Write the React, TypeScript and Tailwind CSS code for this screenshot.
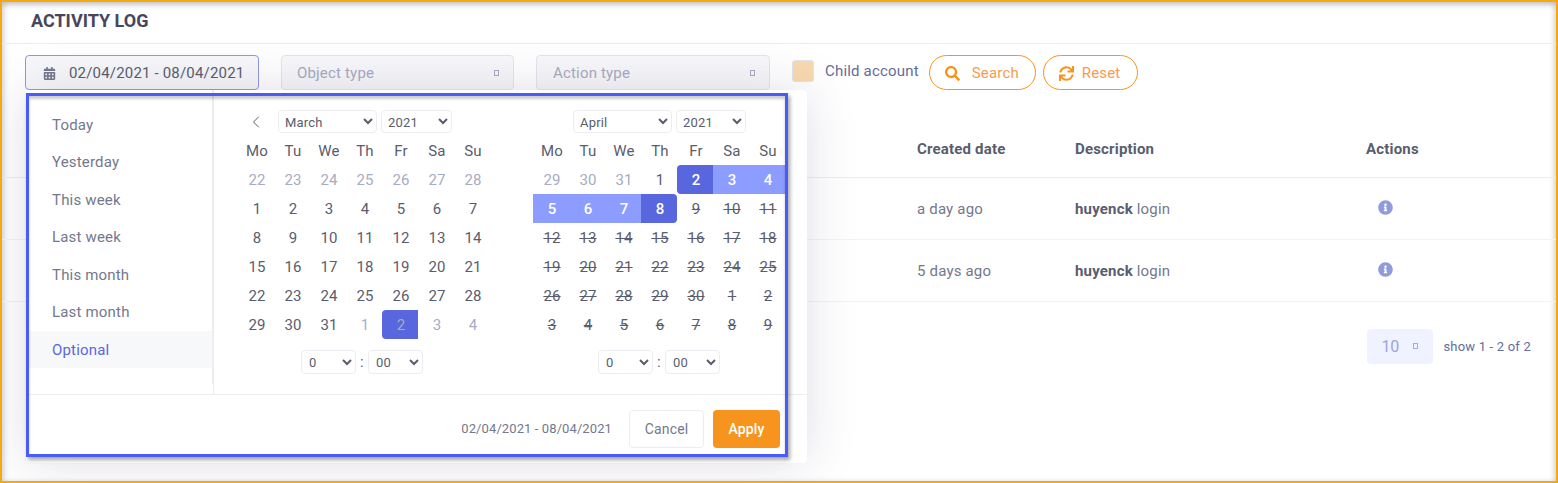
import React from 'react';
import { FaCalendarAlt, FaInfoCircle, FaSearch, FaSync } from 'react-icons/fa';
import { FiChevronLeft } from 'react-icons/fi';

type Tone = 'off' | 'normal' | 'disabled' | 'start' | 'end' | 'range' | 'offActive';
type Cell = { label: number; tone: Tone };

const toneClass: Record<Tone, string> = {
  off: 'text-[#a7abc3]',
  normal: 'text-[#595d6e]',
  disabled: 'text-[#595d6e] line-through',
  start: 'bg-[#5867dd] text-white font-medium rounded-l',
  end: 'bg-[#5867dd] text-white font-medium rounded-r',
  range: 'bg-[#8c9cff] text-white font-medium',
  offActive: 'bg-[#5867dd] text-[#a7abc3] rounded-l',
};

const weekdays = ['Mo', 'Tu', 'We', 'Th', 'Fr', 'Sa', 'Su'];
const ranges = ['Today', 'Yesterday', 'This week', 'Last week', 'This month', 'Last month', 'Optional'];

const span = (from: number, to: number, tone: Tone): Cell[] => {
  const cells: Cell[] = [];
  for (let i = from; i <= to; i++) cells.push({ label: i, tone });
  return cells;
};

const marchCells: Cell[] = [
  ...span(22, 28, 'off'),
  ...span(1, 31, 'normal'),
  ...span(1, 1, 'off'),
  ...span(2, 2, 'offActive'),
  ...span(3, 4, 'off'),
];

const aprilCells: Cell[] = [
  ...span(29, 31, 'off'),
  ...span(1, 1, 'normal'),
  ...span(2, 2, 'start'),
  ...span(3, 7, 'range'),
  ...span(8, 8, 'end'),
  ...span(9, 30, 'disabled'),
  ...span(1, 9, 'disabled'),
];

const Tofu = ({ className }: { className: string }) => (
  <span className={`inline-block w-[5px] h-[6px] border ${className}`} />
);

const TimePicker = ({ className }: { className: string }) => (
  <div className={`flex items-center mt-[11px] ${className}`}>
    <select defaultValue="0" className="w-[55px] h-6 pl-[3px] pt-px text-[13px] text-[#595d6e] bg-white border border-[#ebedf2] rounded">
      <option value="0">0</option>
      <option value="1">1</option>
    </select>
    <span className="w-3 text-center text-[15px] leading-[20px] text-[#595d6e]">:</span>
    <select defaultValue="00" className="w-[55px] h-6 pl-[3px] pt-px text-[13px] text-[#595d6e] bg-white border border-[#ebedf2] rounded">
      <option value="00">00</option>
      <option value="30">30</option>
    </select>
  </div>
);

const Calendar = ({ month, cells, showPrev, yearWidth, timeClass }: {
  month: string;
  cells: Cell[];
  showPrev?: boolean;
  yearWidth: string;
  timeClass: string;
}) => (
  <div className="w-[252px]">
    <div className="flex items-center h-[23px] mb-[3px]">
      <div className="w-[39px] flex justify-center pr-[6px] text-[#595d6e]">
        {showPrev && <FiChevronLeft size={20} strokeWidth={1.2} />}
      </div>
      <select defaultValue={month} className="w-[99px] h-[23px] pl-[2px] pt-px text-[13px] text-[#595d6e] bg-white border border-[#ebedf2] rounded">
        <option value="March">March</option>
        <option value="April">April</option>
      </select>
      <select defaultValue="2021" className={`${yearWidth} h-[23px] ml-1 pl-[2px] pt-px text-[13px] text-[#595d6e] bg-white border border-[#ebedf2] rounded`}>
        <option value="2021">2021</option>
      </select>
    </div>
    <div className="grid grid-cols-7 w-[252px] -ml-px text-[15px] leading-[31px] text-center">
      {weekdays.map((day) => (
        <div key={day} className="h-[29px] pl-[2px] text-[#595d6e]">{day}</div>
      ))}
      {cells.map((cell, i) => (
        <div key={i} className={`h-[29px] pl-[2px] ${toneClass[cell.tone]}`}>{cell.label}</div>
      ))}
    </div>
    <TimePicker className={timeClass} />
  </div>
);

const DatePopup = () => (
  <div className="absolute top-full left-[24px] z-10 w-[781px] h-[373px] flex flex-col bg-white rounded shadow-[0_0_50px_rgba(82,63,105,0.18)]">
    <div className="flex">
      <ul className="w-[187px] h-[294px] pt-[15.5px] border-r border-[#ebedf2] text-[15px] tracking-[0.18px] text-[#74788d]">
        {ranges.map((label) => (
          <li key={label} className={`h-[37.5px] pl-[26px] leading-[38px] ${label === 'Optional' ? 'bg-[#f7f8fa] text-[#5867dd]' : ''}`}>
            {label}
          </li>
        ))}
      </ul>
      <div className="flex gap-[43px] pl-[25px] pt-5 pb-5 border-l border-[#ebedf2]">
        <Calendar month="March" cells={marchCells} showPrev yearWidth="w-[71px]" timeClass="ml-[62px]" />
        <Calendar month="April" cells={aprilCells} yearWidth="w-[70px]" timeClass="ml-[64px]" />
      </div>
    </div>
    <div className="flex items-center justify-end gap-[9px] h-[69px] pr-[27px] pb-[1px] border-t border-[#ebedf2]">
      <span className="mr-[9px] text-[13px] tracking-[0.1px] text-[#74788d] translate-x-px">02/04/2021 - 08/04/2021</span>
      <button className="w-[75px] h-[38px] text-sm text-[#74788d] bg-white border border-[#ebedf2] rounded">Cancel</button>
      <button className="w-[67px] h-[38px] text-sm font-medium text-white bg-[#f7941e] rounded">Apply</button>
    </div>
    {/* blue outline of the screenshot annotation */}
    <div className="absolute left-0 right-[19px] top-[3px] bottom-[6px] border-[3px] border-[#4a5cf7] pointer-events-none shadow-[2px_3px_4px_rgba(0,0,0,0.35),inset_0_3px_3px_rgba(0,0,0,0.2)]" />
  </div>
);

const rows = [
  { created: 'a day ago' },
  { created: '5 days ago' },
];

const App: React.FC = () => {
  return (
    <div className="relative h-[483px] w-[1558px] overflow-hidden border-2 border-[#f5a80f] bg-white font-['Roboto',sans-serif] shadow-[inset_0_4px_4px_rgba(0,0,0,0.15),inset_-4px_0_4px_rgba(0,0,0,0.08),inset_4px_0_4px_rgba(0,0,0,0.08)]">
      <div className="h-[42px] pl-[29px] pt-[8px] border-b border-[#ebedf2]">
        <h1 className="text-lg leading-[21px] font-bold text-[#48465b]">ACTIVITY LOG</h1>
      </div>

      <div className="relative flex items-start pt-[11px] pl-[23px] h-[46px] text-[15px] tracking-[0.18px]">
        <button className="flex items-center w-[234px] h-[35px] pl-[17px] pt-px text-[#595d6e] bg-[#f7f8fa] border border-[#8f97e6] rounded">
          <FaCalendarAlt size={13} className="text-[#74788d]" />
          <span className="ml-[13px]">02/04/2021 - 08/04/2021</span>
        </button>
        <div className="flex items-center justify-between w-[233px] h-[35px] ml-[22px] pl-[15px] pr-[14px] pt-px text-[#a7abc3] bg-[#f7f8fa] border border-[#e2e5ec] rounded">
          Object type
          <Tofu className="border-[#a7abc3] -mt-px" />
        </div>
        <div className="flex items-center justify-between w-[234px] h-[35px] ml-[22px] pl-[16px] pr-[14px] pt-px text-[#a7abc3] bg-[#f7f8fa] border border-[#e2e5ec] rounded">
          Action type
          <Tofu className="border-[#a7abc3] -mt-px" />
        </div>
        <label className="flex items-center ml-[22px] mt-[5px] h-[22px]">
          <span className="w-[22px] h-[22px] bg-[#f9d9b0] border border-[#e2e5ec] rounded-[3px]" />
          <span className="ml-[11px] text-[#646c9a]">Child account</span>
        </label>
        <button className="flex items-center w-[107px] h-[35px] ml-[10px] pl-[15px] pt-px text-[#fb9a4e] border border-[#f7941e] rounded-full">
          <FaSearch size={15} className="text-[#f7941e]" />
          <span className="ml-[12px]">Search</span>
        </button>
        <button className="flex items-center w-[95px] h-[35px] ml-[7px] pl-[15px] pt-px text-[#fb9a4e] border border-[#f7941e] rounded-full">
          <FaSync size={15} className="text-[#f7941e]" />
          <span className="ml-[8px]">Reset</span>
        </button>
        <DatePopup />
      </div>

      <div className="mt-[30px] text-[15px] tracking-[0.18px]">
        <div className="grid grid-cols-[915px_158px_291px_1fr] h-[58px] pt-[2px] items-center border-b border-[#ebedf2] font-bold text-[#595d6e]">
          <div />
          <div>Created date</div>
          <div>Description</div>
          <div>Actions</div>
        </div>
        {rows.map((row) => (
          <div key={row.created} className="grid grid-cols-[915px_158px_291px_1fr] h-[62px] items-center border-b border-[#f0f3ff] text-[#646c9a]">
            <div />
            <div className="pt-[2px] text-[#74788d]">{row.created}</div>
            <div className="pt-[2px] text-[#74788d]"><span className="font-bold text-[#595d6e]">huyenck</span> login</div>
            <div className="pl-[12px] pb-[3px] text-[#8f9bdc]"><FaInfoCircle size={15} /></div>
          </div>
        ))}
      </div>

      <div className="flex items-center justify-end gap-[10px] mt-[27px] pr-[25px]">
        <div className="flex items-center w-[66px] h-[35px] pl-[14px] pt-px text-base text-[#9aa4dc] bg-[#f0f3ff] rounded">
          10
          <Tofu className="ml-[14px] mb-[3px] border-[#a4addb]" />
        </div>
        <span className="text-[13px] tracking-[0.2px] text-[#646c9a]">show 1 - 2 of 2</span>
      </div>
    </div>
  );
};

export default App;
